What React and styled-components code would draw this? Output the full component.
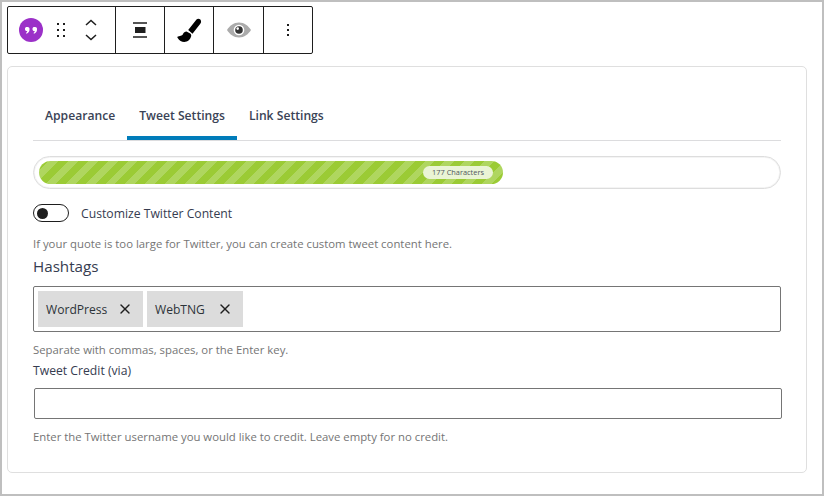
import styled, { createGlobalStyle } from "styled-components";
import { X } from "lucide-react";

const Global = createGlobalStyle`
  html, body { margin: 0; padding: 0; background: #fff; }
  body { font-family: "Open Sans", "Noto Sans", sans-serif; }
  #root { width: 824px; height: 496px; }
`;

const Frame = styled.div`
  box-sizing: border-box;
  width: 824px;
  height: 496px;
  background: #fff;
  border: 2px solid #bfbfbf;
  padding: 4px 15px 0 5px;
  overflow: hidden;
`;

const Toolbar = styled.div`
  display: flex;
  box-sizing: border-box;
  width: 306px;
  height: 48px;
  border: 1px solid #1e1e1e;
  border-radius: 2px;
  margin-bottom: 12px;
`;

const ToolGroup = styled.div`
  box-sizing: border-box;
  width: ${(p) => p.$w}px;
  display: flex;
  align-items: center;
  justify-content: center;
  border-right: ${(p) => (p.$last ? "none" : "1px solid #1e1e1e")};
  flex-shrink: 0;
`;

const BlockGroup = styled(ToolGroup)`
  justify-content: flex-start;
  gap: 6px;
  padding-left: 11px;
`;

const Card = styled.div`
  box-sizing: border-box;
  width: 800px;
  height: 407px;
  border: 1px solid #dfdfdf;
  border-radius: 5px;
  padding: 24px 25px 0;
`;

const Tabs = styled.div`
  display: flex;
  height: 49px;
  border-bottom: 1px solid #dcdcde;
`;

const Tab = styled.div`
  box-sizing: border-box;
  height: 49px;
  padding: 0 12px;
  font-size: 12.15px;
  font-weight: 600;
  line-height: 50px;
  color: #3a4356;
  white-space: nowrap;
  border-bottom: ${(p) => (p.$active ? "4px solid #007cba" : "none")};
`;

const Meter = styled.div`
  box-sizing: border-box;
  width: 748px;
  height: 33px;
  margin-top: 15px;
  border: 1px solid #dddddd;
  box-shadow: inset 0 0 0 1px #f4f4f4;
  border-radius: 17px;
  padding: 4px 5px;
`;

const MeterFill = styled.div`
  box-sizing: border-box;
  height: 23px;
  border-radius: 12px;
  background: repeating-linear-gradient(
    135deg,
    #9bcb35 0 7px,
    #afd65f 7px 14px
  );
  display: flex;
  align-items: center;
  justify-content: flex-end;
  padding-right: 10px;
`;

const MeterLabel = styled.span`
  box-sizing: border-box;
  width: 70px;
  text-align: center;
  font-size: 7.4px;
  line-height: 13px;
  border-radius: 7px;
  color: #50575e;
  background: #eaf4d5;
  white-space: nowrap;
`;

const ToggleRow = styled.div`
  display: flex;
  align-items: center;
  gap: 12px;
  margin-top: 15px;
  height: 18px;
`;

const Toggle = styled.span`
  box-sizing: border-box;
  display: flex;
  align-items: center;
  width: 36px;
  height: 18px;
  border: 1px solid #1e1e1e;
  border-radius: 9px;
  padding: 0 3px;
`;

const Knob = styled.span`
  display: block;
  width: 11px;
  height: 11px;
  border-radius: 50%;
  background: #1e1e1e;
`;

const ToggleLabel = styled.span`
  font-size: 12.2px;
  color: #363c50;
`;

const Help = styled.p`
  margin: ${(p) => p.$top}px 0 0;
  font-size: 11.35px;
  line-height: 16px;
  color: #757575;
  white-space: nowrap;
`;

const BigLabel = styled.div`
  margin-top: 4px;
  font-size: 15.2px;
  line-height: 20px;
  color: #363c50;
`;

const TagBox = styled.div`
  box-sizing: border-box;
  display: flex;
  gap: 4px;
  width: 748px;
  height: 46px;
  margin-top: 10px;
  padding: 4px;
  border: 1px solid #757575;
  border-radius: 2px;
`;

const Tag = styled.span`
  display: flex;
  align-items: center;
  justify-content: space-between;
  box-sizing: border-box;
  width: ${(p) => p.$w}px;
  padding: 0 10px 0 8px;
  background: #dcdcdc;
  font-size: 12.1px;
  color: #2c3338;
`;

const SmallLabel = styled.div`
  margin-top: 5px;
  font-size: 12.2px;
  line-height: 16px;
  color: #363c50;
`;

const Input = styled.input`
  display: block;
  box-sizing: border-box;
  width: 748px;
  height: 31px;
  margin: 9px 0 0 1px;
  border: 1px solid #757575;
  border-radius: 2px;
  background: #fff;
`;

const Grip = () => (
  <svg width="24" height="24" viewBox="0 0 24 24" fill="#1e1e1e">
    <path d="M8 5h2v2H8zM14 5h2v2h-2zM8 11h2v2H8zM14 11h2v2h-2zM8 17h2v2H8zM14 17h2v2h-2z" />
  </svg>
);

const Mover = () => (
  <svg width="24" height="36" viewBox="0 0 24 36" fill="none" stroke="#1e1e1e" strokeWidth="1.5">
    <path d="M7 13l5-4.500 5 4.500M7 23l5 4.500 5-4.500" />
  </svg>
);

const QuoteBadge = () => (
  <svg width="24" height="24" viewBox="0 0 24 24">
    <circle cx="12" cy="12" r="12" fill="#9b30c8" />
    <path
      fill="#fff"
      d="M6 10.700c0-1 .8-1.700 1.800-1.700h.9c1 0 1.800.8 1.800 1.800v.6c0 2-1 3.500-3 4.300l-.5-.8c.8-.5 1.200-1.100 1.300-1.900h-.5c-1 0-1.800-.8-1.800-1.800zM13.500 10.700c0-1 .8-1.700 1.800-1.700h.9c1 0 1.800.8 1.800 1.800v.6c0 2-1 3.500-3 4.300l-.5-.8c.8-.5 1.200-1.100 1.300-1.900h-.5c-1 0-1.800-.8-1.800-1.800z"
    />
  </svg>
);

const AlignIcon = () => (
  <svg width="24" height="24" viewBox="0 0 24 24">
    <path fill="#555" d="M5 4h14v2H5zM5 18h14v2H5z" />
    <path fill="#1e1e1e" d="M7 9h10.500v6H7z" />
  </svg>
);

const BrushIcon = () => (
  <svg width="28" height="28" viewBox="0 0 28 28" fill="#000">
    <path d="M21.500 3.500c1.700-1.500 5-.3 4.600 2.600-.1.800-.5 1.400-1 2l-7.600 9.700-4.300-3.700z" />
    <path d="M11.500 15.500c-1.500 0-3 1.200-3.500 2.500-.5 1.500-2 1.800-5 2.500-.8.200-.8.800-.3 1.500 1.500 2.500 4 4 6.500 4 3.500 0 6.500-3 7-6 .2-1-.2-1.800-1-2.500z" />
  </svg>
);

const EyeIcon = () => (
  <svg width="26" height="26" viewBox="0 0 26 26">
    <path
      fill="#ababab"
      fillRule="evenodd"
      d="M13 5.500c-5.200 0-9.600 3.500-12 7.500 2.400 4 6.800 7.500 12 7.500s9.600-3.500 12-7.500c-2.400-4-6.800-7.500-12-7.500zm0 2.200a5.300 5.300 0 1 1 0 10.600 5.300 5.300 0 0 1 0-10.600z"
    />
    <circle cx="13" cy="13" r="3.800" fill="#333" />
    <circle cx="11.700" cy="11.600" r="1.300" fill="#fff" />
  </svg>
);

const DotsIcon = () => (
  <svg width="24" height="24" viewBox="0 0 24 24" fill="#1e1e1e">
    <path d="M11 6h2v2h-2zM11 11h2v2h-2zM11 16h2v2h-2z" />
  </svg>
);

export default function App() {
  return (
    <>
      <Global />
      <Frame>
        <Toolbar>
          <BlockGroup $w={108}>
            <QuoteBadge />
            <Grip />
            <Mover />
          </BlockGroup>
          <ToolGroup $w={49}><AlignIcon /></ToolGroup>
          <ToolGroup $w={49}><BrushIcon /></ToolGroup>
          <ToolGroup $w={50}><EyeIcon /></ToolGroup>
          <ToolGroup $w={48} $last><DotsIcon /></ToolGroup>
        </Toolbar>
        <Card>
          <Tabs>
            <Tab>Appearance</Tab>
            <Tab $active>Tweet Settings</Tab>
            <Tab>Link Settings</Tab>
          </Tabs>
          <Meter>
            <MeterFill style={{ width: `${(464 / 736) * 100}%` }}>
              <MeterLabel>177 Characters</MeterLabel>
            </MeterFill>
          </Meter>
          <ToggleRow>
            <Toggle><Knob /></Toggle>
            <ToggleLabel>Customize Twitter Content</ToggleLabel>
          </ToggleRow>
          <Help $top={14}>If your quote is too large for Twitter, you can create custom tweet content here.</Help>
          <BigLabel>Hashtags</BigLabel>
          <TagBox>
            <Tag $w={105}>WordPress <X size={16} color="#1e1e1e" /></Tag>
            <Tag $w={96}>WebTNG <X size={16} color="#1e1e1e" /></Tag>
          </TagBox>
          <Help $top={10}>Separate with commas, spaces, or the Enter key.</Help>
          <SmallLabel>Tweet Credit (via)</SmallLabel>
          <Input />
          <Help $top={10}>Enter the Twitter username you would like to credit. Leave empty for no credit.</Help>
        </Card>
      </Frame>
    </>
  );
}
